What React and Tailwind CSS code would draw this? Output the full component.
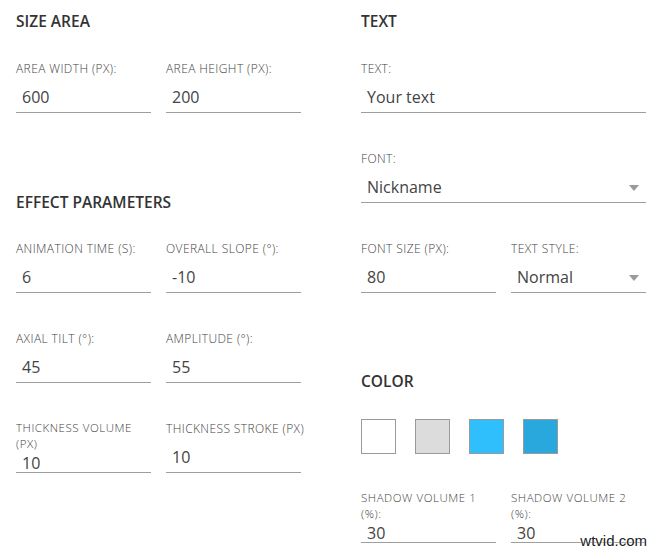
import React from 'react';

const Arrow = () => (
  <svg width="10" height="6" viewBox="0 0 10 6" className="mt-[9px] shrink-0">
    <polygon points="0,0 10,0 5,6" fill="#9a9a9a" />
  </svg>
);

// single-line label field: label / gap / input with underline
const Field = ({ label, value, select, nowrap }) => (
  <div className="flex h-[53px] flex-col justify-end">
    <div
      className={`text-[12px] font-light leading-[15px] tracking-[0.4px] uppercase text-[#444] ${nowrap ? 'whitespace-nowrap' : ''}`}
    >
      {label}
    </div>
    <div className="mt-[7px] flex h-[30px] items-start justify-between border-b border-[#9e9e9e] pl-[6px] pr-[7px] pt-[3px] text-[16px] leading-[22px] text-[#444]">
      <span>{value}</span>
      {select && <Arrow />}
    </div>
  </div>
);

// two-line label field, input sits tight under the label
const TallField = ({ line1, line2, value }) => (
  <div className="flex h-[53px] flex-col justify-end">
    <div className="mb-[3px] text-[11.5px] font-light leading-[16px] tracking-[0.55px] uppercase text-[#444]">
      <div className="whitespace-nowrap">{line1}</div>
      <div>{line2}</div>
    </div>
    <div className="flex h-[24px] items-start border-b border-[#9e9e9e] pl-[6px] pr-[7px] text-[16px] leading-[16px] text-[#444]">
      <span>{value}</span>
    </div>
  </div>
);

const Heading = ({ children, className = '' }) => (
  <h2 className={`text-[15.5px] font-semibold leading-[24px] text-[#333] ${className}`}>{children}</h2>
);

const swatches = [
  'bg-white',
  'bg-[#dcdcdc]',
  'bg-[#2fbffd]',
  'bg-[#29a8de]',
];

export default function App() {
  return (
    <div
      className="relative h-[551px] w-[661px] overflow-hidden bg-white"
      style={{ fontFamily: '"Open Sans", "Noto Sans", sans-serif' }}
    >
      <div className="flex gap-[60px] pl-[16px] pt-[9px]">
        {/* left column */}
        <div className="w-[285px]">
          <Heading>SIZE AREA</Heading>
          <div className="mt-[27px] grid grid-cols-2 gap-x-[15px]">
            <Field label="Area width (px):" value="600" />
            <Field label="Area height (px):" value="200" />
          </div>

          <Heading className="mt-[77px]">EFFECT PARAMETERS</Heading>
          <div className="mt-[26px] grid grid-cols-2 gap-x-[15px] gap-y-[37px]">
            <Field label="Animation time (s):" value="6" />
            <Field label="Overall slope (°):" value="-10" />
            <Field label="Axial tilt (°):" value="45" />
            <Field label="Amplitude (°):" value="55" />
            <TallField line1="Thickness volume" line2="(px)" value="10" />
            <Field label="Thickness stroke (px)" value="10" nowrap />
          </div>
        </div>

        {/* right column */}
        <div className="w-[285px]">
          <Heading>TEXT</Heading>
          <div className="mt-[27px]">
            <Field label="Text:" value="Your text" />
          </div>
          <div className="mt-[37px]">
            <Field label="Font:" value="Nickname" select />
          </div>
          <div className="mt-[37px] grid grid-cols-2 gap-x-[15px]">
            <Field label="Font size (px):" value="80" />
            <Field label="Text style:" value="Normal" select />
          </div>

          <Heading className="mt-[76px]">COLOR</Heading>
          <div className="mt-[26px] flex gap-[19px]">
            {swatches.map((c) => (
              <div key={c} className={`h-[35px] w-[35px] border border-[#9a9a9a] ${c}`} />
            ))}
          </div>
          <div className="mt-[36px] grid grid-cols-2 gap-x-[15px]">
            <TallField line1="Shadow volume 1" line2="(%):" value="30" />
            <TallField line1="Shadow volume 2" line2="(%):" value="30" />
          </div>
        </div>
      </div>

      {/* watermark */}
      <div
        className="absolute bottom-[1px] right-[14px] text-[15px] leading-[18px] text-[#222]"
        style={{ fontFamily: '"Liberation Sans", Arial, sans-serif', textShadow: '0 0 2px #fff, 0 0 2px #fff' }}
      >
        wtvid.com
      </div>
    </div>
  );
}
